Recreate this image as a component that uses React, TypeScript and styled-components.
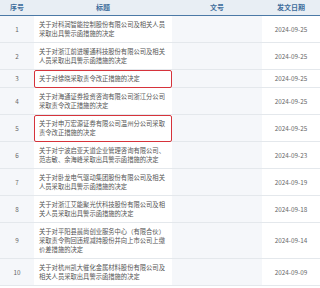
import * as React from 'react';

import styled, { createGlobalStyle } from 'styled-components';

const GlobalStyle = createGlobalStyle`
  html, body {
    margin: 0;
    padding: 0;
    background: #ffffff;
  }
  body {
    font-family: "Noto Sans CJK SC", "Noto Sans", sans-serif;
  }
`;

const Table = styled.table`
  width: 320px;
  table-layout: fixed;
  border-collapse: collapse;
  font-family: "Noto Sans CJK SC", "Noto Sans", sans-serif;
`;

const HeadRow = styled.tr`
  background-color: #e8eef4;
  border-bottom: 1.5px solid #4b79a6;
`;

const HeadCell = styled.th`
  height: 15px;
  padding: 0;
  font-size: 7px;
  line-height: 15px;
  font-weight: 700;
  color: #3e6d9c;
  text-align: center;
`;

const Row = styled.tr`
  border-bottom: 1px solid #e4e8ec;
`;

const Cell = styled.td<{ $tint?: boolean }>`
  padding: 4px 0;
  font-size: 6.3px;
  line-height: 9px;
  color: #666666;
  text-align: center;
  vertical-align: middle;
  background-color: ${(p) => (p.$tint ? '#f5f7fa' : '#ffffff')};
`;

const TitleCell = styled.td<{ $flag?: boolean }>`
  padding: 4px 5px 4px 5px;
  font-size: 6.3px;
  line-height: 9px;
  color: #555555;
  text-align: left;
  vertical-align: middle;
  word-break: break-all;
  border-radius: 2px;
  outline: ${(p) => (p.$flag ? '1.5px solid #d6333b' : 'none')};
  outline-offset: -1px;
`;

type Notice = { title: string; date: string; flag?: boolean };

const notices: Notice[] = [
  { title: '关于对科润智能控制股份有限公司及相关人员采取出具警示函措施的决定', date: '2024-09-25' },
  { title: '关于对浙江前进暖通科技股份有限公司及相关人员采取出具警示函措施的决定', date: '2024-09-25' },
  { title: '关于对徐晓采取责令改正措施的决定', date: '2024-09-25', flag: true },
  { title: '关于对海通证券投资咨询有限公司浙江分公司采取责令改正措施的决定', date: '2024-09-25' },
  { title: '关于对申万宏源证券有限公司温州分公司采取责令改正措施的决定', date: '2024-09-25', flag: true },
  { title: '关于对宁波启亚天道企业管理咨询有限公司、范志敏、余海峰采取出具警示函措施的决定', date: '2024-09-23' },
  { title: '关于对卧龙电气驱动集团股份有限公司及相关人员采取出具警示函措施的决定', date: '2024-09-19' },
  { title: '关于对浙江艾能聚光伏科技股份有限公司及相关人员采取出具警示函措施的决定', date: '2024-09-18' },
  { title: '关于对平阳县晨尚创业服务中心（有限合伙）采取责令购回违规减持股份并向上市公司上缴价差措施的决定', date: '2024-09-14' },
  { title: '关于对杭州凯大催化金属材料股份有限公司及相关人员采取出具警示函措施的决定', date: '2024-09-09' },
];

const App: React.FC = () => {
  return (
    <>
      <GlobalStyle />
      <Table>
        <colgroup>
          <col style={{ width: 34 }} />
          <col style={{ width: 138 }} />
          <col style={{ width: 90 }} />
          <col style={{ width: 58 }} />
        </colgroup>
        <thead>
          <HeadRow>
            <HeadCell>序号</HeadCell>
            <HeadCell>标题</HeadCell>
            <HeadCell>文号</HeadCell>
            <HeadCell>发文日期</HeadCell>
          </HeadRow>
        </thead>
        <tbody>
          {notices.map((n, i) => (
            <Row key={i}>
              <Cell $tint>{i + 1}</Cell>
              <TitleCell $flag={n.flag}>{n.title}</TitleCell>
              <Cell $tint></Cell>
              <Cell>{n.date}</Cell>
            </Row>
          ))}
        </tbody>
      </Table>
    </>
  );
};

export default App;
